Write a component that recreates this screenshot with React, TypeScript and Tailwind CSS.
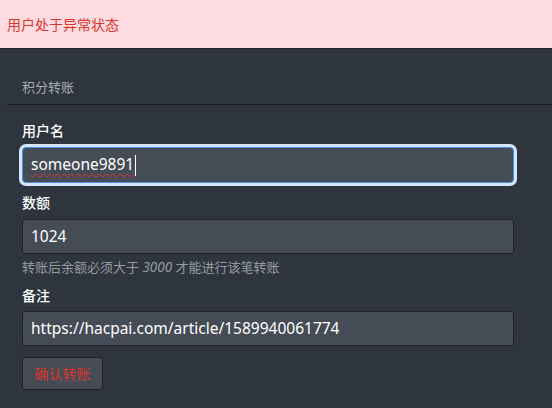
export default function App() {
  const font = { fontFamily: '"Noto Sans", "Noto Sans CJK SC", sans-serif' };

  return (
    <div className="w-full h-[408px] bg-[#2f353d] overflow-hidden" style={font}>
      {/* 异常状态提示 */}
      <div className="h-[49px] bg-[#fddbe0] border-b border-[#1f2226] px-[7px] flex items-center text-[14px] text-[#d9352c]">
        用户处于异常状态
      </div>

      {/* 标题 */}
      <div className="ml-[7px] h-[56px] border-b border-[#1b1e22] flex items-end pb-[8px] pl-[15px]">
        <span className="text-[13px] leading-[18px] text-[#a7adb4]">积分转账</span>
      </div>

      {/* 表单 */}
      <div className="w-[492px] ml-[22px] pt-[16px]">
        <div className="text-[14px] leading-[20px] font-medium text-white">用户名</div>
        <div className="mt-[6px] h-[36px] rounded-[4px] border border-[#4a8fe7] bg-[#454c55] ring-[3px] ring-[#d4e5ff] flex items-center pl-[8px]">
          <span className="text-[15.5px] text-white underline decoration-wavy decoration-[#d33] decoration-1 underline-offset-[3px]">
            someone9891
          </span>
          <span className="ml-px w-px h-[21px] bg-white" />
        </div>

        <div className="mt-[10px] text-[14px] leading-[20px] font-medium text-white">数额</div>
        <div className="mt-[6px] h-[35px] rounded-[3px] border border-[#1e2126] bg-[#454c55] flex items-center pl-[8px] text-[15.5px] text-white">
          1024
        </div>
        <div className="mt-[4px] text-[13px] leading-[18px] text-[#959ba2]">
          转账后余额必须大于 <i className="text-[13.5px]">3000</i> 才能进行该笔转账
        </div>

        <div className="mt-[10px] text-[14px] leading-[20px] font-medium text-white">备注</div>
        <div className="mt-[5px] h-[35px] rounded-[3px] border border-[#1e2126] bg-[#454c55] flex items-center pl-[8px] text-[15.5px] text-white">
          https://hacpai.com/article/1589940061774
        </div>

        <button className="mt-[11px] w-[81px] h-[33px] rounded-[3px] border border-[#1e2126] bg-[#454c55] text-[14px] text-[#d9352c]">
          确认转账
        </button>
      </div>
    </div>
  );
}
